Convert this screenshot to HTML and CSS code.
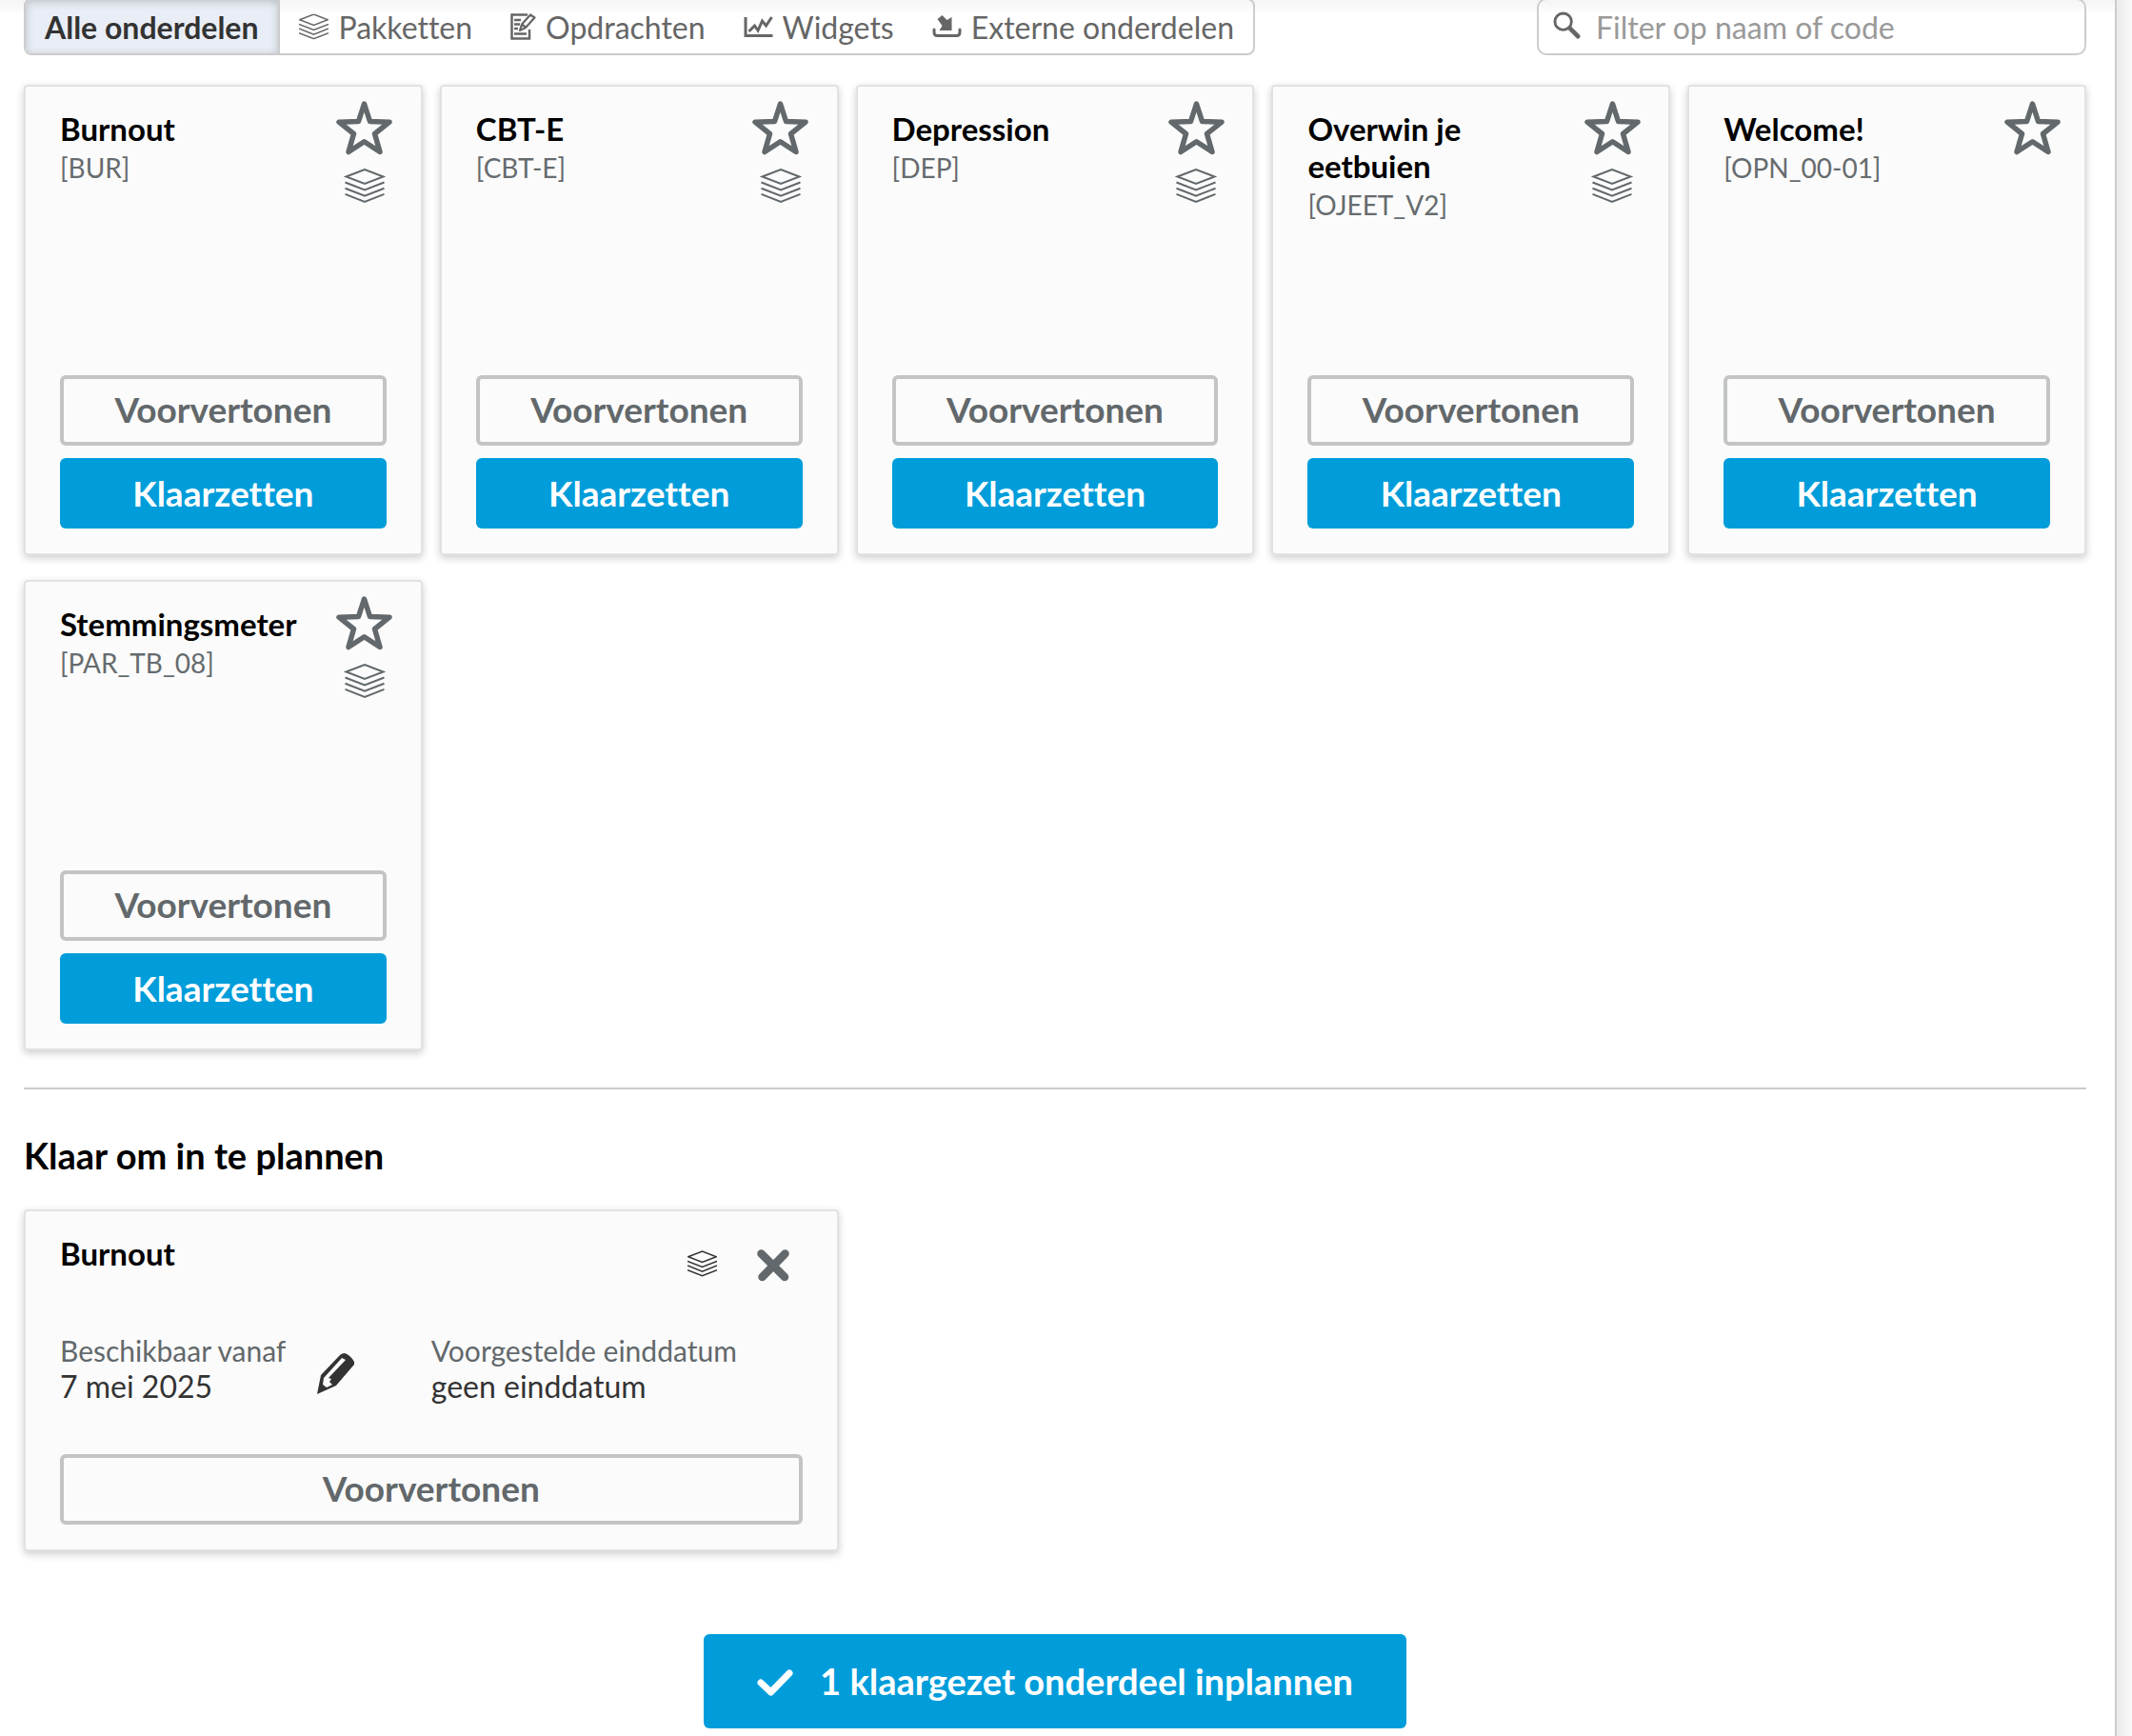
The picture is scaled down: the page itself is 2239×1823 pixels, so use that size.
FILE: index.html
```html
<!DOCTYPE html>
<html lang="nl">
<head>
    <meta charset="UTF-8">
    <meta name="viewport" content="width=device-width, initial-scale=1.0">
    <title>Onderdelen inplannen</title>
    <link rel="stylesheet" href="styles.css">
</head>
<body>
    <svg class="sprite" aria-hidden="true">
        <symbol id="icon-layers" viewBox="0 0 41 36">
            <path d="M1 8.500L20.500 1L40 8.500L20.500 16Z M0 14.500L20.500 22.500L41 14.500 M0 20.700L20.500 28.700L41 20.700 M0 26.900L20.500 34.900L41 26.900" fill="none" stroke="currentColor" stroke-width="2"/>
        </symbol>
        <symbol id="icon-star" viewBox="0 0 59 57">
            <path d="M29.500 3L35.500 21.500L56 22.200L40.500 34.500L46 53.500L29.500 42.800L13 53.500L18.500 34.500L3 22.200L23.500 21.500Z" fill="none" stroke="currentColor" stroke-width="5.500" stroke-linejoin="round"/>
        </symbol>
    </svg>
    <main class="panel">
        <div class="toolbar">
            <div class="tabs">
                <button class="tab active">Alle onderdelen</button>
                <button class="tab">
                    <svg class="tab-icon" viewBox="0 0 41 36"><use href="#icon-layers"/></svg>
                    Pakketten
                </button>
                <button class="tab">
                    <svg class="tab-icon tab-icon-edit" viewBox="0 0 27 28">
                        <path d="M20 17V26.500H1.500V1.500H18" fill="none" stroke="currentColor" stroke-width="2.500"/>
                        <path d="M4 7H11M4 11.500H10M4 16H8M4 21.500H17" stroke="currentColor" stroke-width="2.500"/>
                        <path d="M10 18L12 11.500L21 1.500L25.500 4.500L16 15Z M13 12L16 15" fill="none" stroke="currentColor" stroke-width="2.200" stroke-linejoin="round"/>
                    </svg>
                    Opdrachten
                </button>
                <button class="tab">
                    <svg class="tab-icon" viewBox="0 0 30 28">
                        <path d="M1.500 4V23.500H30" fill="none" stroke="currentColor" stroke-width="3"/>
                        <path d="M5 19L11 13L14.500 18L19 8L23 13L29 4" fill="none" stroke="currentColor" stroke-width="3"/>
                    </svg>
                    Widgets
                </button>
                <button class="tab">
                    <svg class="tab-icon" viewBox="0 0 30 28">
                        <path d="M1.500 17V20Q1.500 23.500 5 23.500H25Q28.500 23.500 28.500 20V17" fill="none" stroke="currentColor" stroke-width="3" stroke-linecap="round"/>
                        <path d="M5 6L10 2L15 7L20 4V18H7L10 13Z" fill="currentColor"/>
                    </svg>
                    Externe onderdelen
                </button>
            </div>
            <label class="search">
                <svg class="search-icon" viewBox="0 0 30 30" aria-hidden="true">
                    <circle cx="11" cy="11" r="9" fill="none" stroke="currentColor" stroke-width="3"/>
                    <path d="M18 18L27 27" stroke="currentColor" stroke-width="5" stroke-linecap="round"/>
                </svg>
                <input type="text" placeholder="Filter op naam of code" aria-label="Filter op naam of code">
            </label>
        </div>

        <div class="cards">
            <article class="card">
                <div class="card-head">
                    <div class="card-text">
                        <h3>Burnout</h3>
                        <p class="code">[BUR]</p>
                    </div>
                    <div class="card-icons">
                        <button class="icon-button" aria-label="Favoriet"><svg class="star"><use href="#icon-star"/></svg></button>
                        <svg class="layers"><use href="#icon-layers"/></svg>
                    </div>
                </div>
                <button class="btn btn-outline">Voorvertonen</button>
                <button class="btn btn-primary">Klaarzetten</button>
            </article>
            <article class="card">
                <div class="card-head">
                    <div class="card-text">
                        <h3>CBT-E</h3>
                        <p class="code">[CBT-E]</p>
                    </div>
                    <div class="card-icons">
                        <button class="icon-button" aria-label="Favoriet"><svg class="star"><use href="#icon-star"/></svg></button>
                        <svg class="layers"><use href="#icon-layers"/></svg>
                    </div>
                </div>
                <button class="btn btn-outline">Voorvertonen</button>
                <button class="btn btn-primary">Klaarzetten</button>
            </article>
            <article class="card">
                <div class="card-head">
                    <div class="card-text">
                        <h3>Depression</h3>
                        <p class="code">[DEP]</p>
                    </div>
                    <div class="card-icons">
                        <button class="icon-button" aria-label="Favoriet"><svg class="star"><use href="#icon-star"/></svg></button>
                        <svg class="layers"><use href="#icon-layers"/></svg>
                    </div>
                </div>
                <button class="btn btn-outline">Voorvertonen</button>
                <button class="btn btn-primary">Klaarzetten</button>
            </article>
            <article class="card">
                <div class="card-head">
                    <div class="card-text">
                        <h3>Overwin je eetbuien</h3>
                        <p class="code">[OJEET_V2]</p>
                    </div>
                    <div class="card-icons">
                        <button class="icon-button" aria-label="Favoriet"><svg class="star"><use href="#icon-star"/></svg></button>
                        <svg class="layers"><use href="#icon-layers"/></svg>
                    </div>
                </div>
                <button class="btn btn-outline">Voorvertonen</button>
                <button class="btn btn-primary">Klaarzetten</button>
            </article>
            <article class="card">
                <div class="card-head">
                    <div class="card-text">
                        <h3>Welcome!</h3>
                        <p class="code">[OPN_00-01]</p>
                    </div>
                    <div class="card-icons">
                        <button class="icon-button" aria-label="Favoriet"><svg class="star"><use href="#icon-star"/></svg></button>
                    </div>
                </div>
                <button class="btn btn-outline">Voorvertonen</button>
                <button class="btn btn-primary">Klaarzetten</button>
            </article>
            <article class="card">
                <div class="card-head">
                    <div class="card-text">
                        <h3>Stemmingsmeter</h3>
                        <p class="code">[PAR_TB_08]</p>
                    </div>
                    <div class="card-icons">
                        <button class="icon-button" aria-label="Favoriet"><svg class="star"><use href="#icon-star"/></svg></button>
                        <svg class="layers"><use href="#icon-layers"/></svg>
                    </div>
                </div>
                <button class="btn btn-outline">Voorvertonen</button>
                <button class="btn btn-primary">Klaarzetten</button>
            </article>
        </div>

        <hr>

        <h2>Klaar om in te plannen</h2>
        <div class="cards">
            <article class="card card-wide">
                <div class="planned-head">
                    <h3>Burnout</h3>
                    <svg class="layers-small"><use href="#icon-layers"/></svg>
                    <button class="icon-button" aria-label="Verwijderen">
                        <svg class="close" viewBox="0 0 34 34">
                            <path d="M4.500 4.500L29 29M29.500 4.500L5.500 29" stroke="currentColor" stroke-width="8.500" stroke-linecap="round"/>
                        </svg>
                    </button>
                </div>
                <div class="dates">
                    <div class="date">
                        <div>
                            <p class="label">Beschikbaar vanaf</p>
                            <p class="value">7 mei 2025</p>
                        </div>
                        <button class="icon-button" aria-label="Datum wijzigen">
                            <svg class="pencil" viewBox="0 0 39 43">
                                <path fill="#333" fill-rule="evenodd" d="M0 43L4 23L24 2Q26 0 29 0Q35 2 39 9Q40 11 38 13L20 34ZM7 26L6 33L10 36L16 33L13 30L15 27L12 26L30 7L26 5Z"/>
                            </svg>
                        </button>
                    </div>
                    <div class="date">
                        <div>
                            <p class="label">Voorgestelde einddatum</p>
                            <p class="value">geen einddatum</p>
                        </div>
                    </div>
                </div>
                <button class="btn btn-outline">Voorvertonen</button>
            </article>
        </div>

        <button class="btn btn-primary btn-plan">
            <svg class="check" viewBox="0 0 38 28">
                <path d="M4 14L14.500 24L34 4" fill="none" stroke="currentColor" stroke-width="7" stroke-linecap="round" stroke-linejoin="round"/>
            </svg>
            1 klaargezet onderdeel inplannen
        </button>
    </main>
</body>
</html>
```
FILE: styles.css
```css
* {
    box-sizing: border-box;
}
body {
    margin: 0;
    padding-right: 16px;
    min-height: 100vh;
    display: flex;
    font-family: Lato, "Open Sans", sans-serif;
    font-variant-ligatures: none;
    color: #333;
    background: linear-gradient(to left, #f9f9f9, #ebebeb 16px);
    overflow: hidden;
}
h2, h3, p {
    margin: 0;
}
button, input {
    font-family: inherit;
    font-variant-ligatures: inherit;
    color: inherit;
}
.sprite {
    display: none;
}
.panel {
    flex: 1;
    padding: 0 30px 8px 25px;
    border-right: 2px solid #ccc;
    background: linear-gradient(#f5f5f5, #fff 16px);
}

/* toolbar */
.toolbar {
    display: flex;
    justify-content: space-between;
    margin-top: -2px;
    height: 60px;
}
.tabs {
    display: flex;
    border: 2px solid #ccc;
    border-radius: 8px;
    overflow: hidden;
}
.tab {
    display: flex;
    align-items: center;
    gap: 10px;
    padding: 0 20px;
    border: none;
    background: none;
    color: #666;
    font-size: 32px;
    cursor: pointer;
}
.tab.active {
    padding-right: 21px;
    background: #e9eef6;
    color: #333;
    font-weight: bold;
    border-right: 2px solid #ccc;
    box-shadow: inset 0 2px 10px rgba(0, 0, 0, 0.2);
}
.tab-icon {
    width: 31px;
    height: 28px;
}
.tab-icon-edit {
    width: 27px;
}
.search {
    display: flex;
    align-items: center;
    gap: 16px;
    width: 577px;
    padding: 0 15px;
    border: 2px solid #ccc;
    border-radius: 10px;
}
.search-icon {
    width: 29px;
    height: 29px;
    margin-bottom: 4px;
    color: #666;
}
.search input {
    flex: 1;
    padding: 0;
    border: none;
    outline: none;
    background: none;
    font-size: 32px;
}
.search input::placeholder {
    color: #999;
}

/* cards */
.cards {
    display: grid;
    grid-template-columns: repeat(5, 1fr);
    gap: 26px 18px;
}
.toolbar + .cards {
    margin-top: 31px;
}
.card {
    display: flex;
    flex-direction: column;
    min-height: 494px;
    padding: 25px 36px 26px;
    border: 2px solid #e2e2e2;
    border-radius: 4px;
    background: #fbfbfb;
    box-shadow: 0 3px 8px rgba(0, 0, 0, 0.2);
}
.card-wide {
    grid-column: span 2;
    min-height: 359px;
}
.card-head {
    flex: 1;
    display: flex;
    justify-content: space-between;
    margin-right: -11px;
}
h3 {
    color: #000;
    font-size: 33px;
    line-height: 39px;
}
.code {
    color: #666b6e;
    font-size: 28px;
    line-height: 43px;
}
.card-icons {
    display: flex;
    flex-direction: column;
    align-items: center;
    gap: 14px;
    margin-top: -10px;
    color: #62686b;
}
.icon-button {
    display: flex;
    padding: 0;
    border: none;
    background: none;
    color: #62686b;
    cursor: pointer;
}
.star {
    width: 59px;
    height: 57px;
}
.layers {
    width: 68px;
    height: 36px;
}
.btn {
    height: 74px;
    padding: 0 0 2px;
    border: none;
    border-radius: 6px;
    font-size: 37px;
    font-weight: bold;
    cursor: pointer;
}
.btn-outline {
    padding-bottom: 3px;
    border: 4px solid #c2c4c6;
    background: none;
    color: #62686b;
}
.btn-primary {
    background: #009dda;
    color: #fff;
}
.btn + .btn {
    margin-top: 13px;
}

/* planned items */
hr {
    height: 2px;
    margin: 39px 0 48px;
    border: none;
    background: #ccc;
}
h2 {
    margin-bottom: 36px;
    color: #000;
    font-size: 38px;
    line-height: 42px;
}
.planned-head {
    display: flex;
    gap: 42px;
    padding-right: 14px;
}
.planned-head h3 {
    flex: 1;
}
.layers-small {
    width: 31px;
    height: 28px;
    margin-top: 16px;
}
.close {
    width: 34px;
    height: 34px;
    margin-top: 15px;
}
.dates {
    flex: 1;
    display: grid;
    grid-template-columns: 1fr 1fr;
    margin-top: 53px;
}
.date {
    display: flex;
    align-items: flex-start;
    gap: 33px;
}
.label {
    color: #62686b;
    font-size: 30px;
    line-height: 38px;
}
.value {
    font-size: 32px;
    line-height: 38px;
}
.pencil {
    width: 39px;
    height: 43px;
    margin-top: 22px;
}
.btn-plan {
    display: flex;
    align-items: center;
    justify-content: center;
    gap: 28px;
    width: 738px;
    height: 99px;
    margin: 87px auto 0;
    font-size: 38px;
}
.check {
    width: 38px;
    height: 28px;
    margin-top: 5px;
}
```
